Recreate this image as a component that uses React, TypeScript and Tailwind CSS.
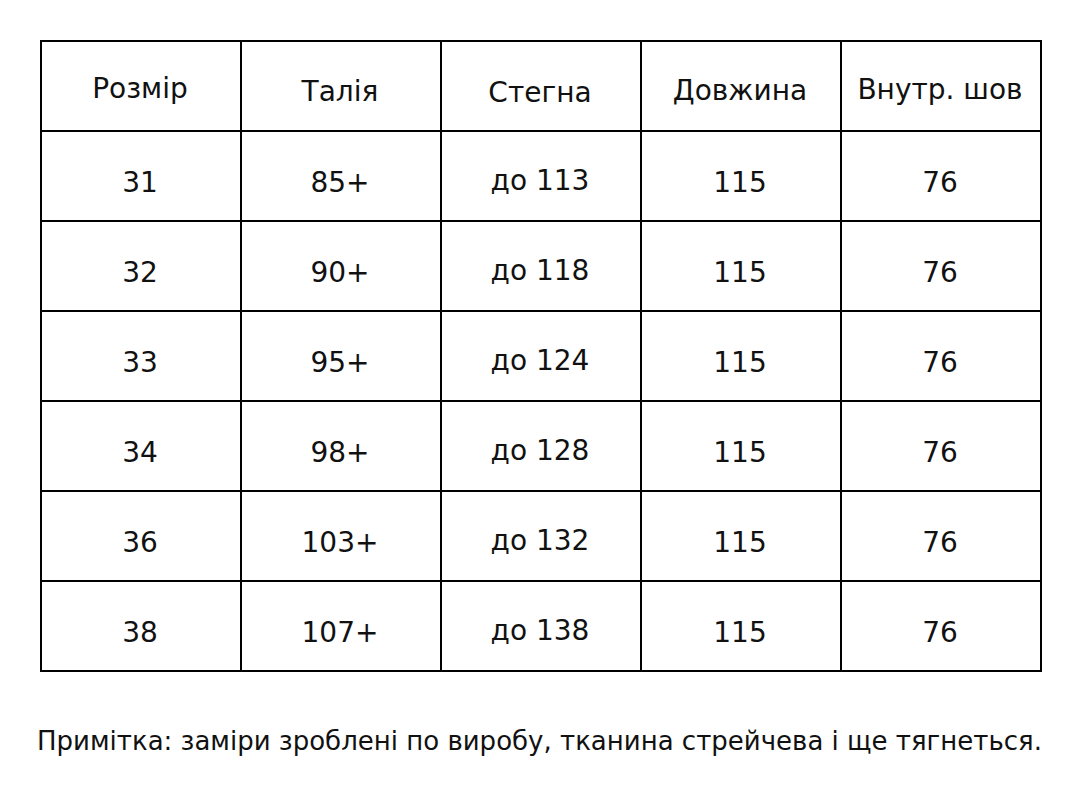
const headers = [
  { text: 'Розмір', shift: 'pt-[6px]' },
  { text: 'Талія', shift: 'pt-[12px]' },
  { text: 'Стегна', shift: 'pt-[14px]' },
  { text: 'Довжина', shift: 'pt-[10px]' },
  { text: 'Внутр. шов', shift: 'pt-[8px]' },
]

const rows = [
  ['31', '85+', 'до 113', '115', '76'],
  ['32', '90+', 'до 118', '115', '76'],
  ['33', '95+', 'до 124', '115', '76'],
  ['34', '98+', 'до 128', '115', '76'],
  ['36', '103+', 'до 132', '115', '76'],
  ['38', '107+', 'до 138', '115', '76'],
]

export default function App() {
  return (
    <div
      className="w-[1080px] h-[790px] bg-white text-[#111] pt-[40px]"
      style={{ fontFamily: '"DejaVu Sans", sans-serif' }}
    >
      <div className="ml-[40px] w-[1002px] grid grid-cols-5 border-l-2 border-t-2 border-black">
        {headers.map((h) => (
          <div
            key={h.text}
            className={`h-[90px] pr-[2px] border-r-2 border-b-2 border-black flex items-center justify-center text-[28px] ${h.shift}`}
          >
            {h.text}
          </div>
        ))}
        {rows.map((row, i) =>
          row.map((cell, j) => (
            <div
              key={i + '-' + j}
              className={`h-[90px] pr-[2px] border-r-2 border-b-2 border-black flex items-center justify-center text-[28px] ${
                j === 2 ? 'pt-[10px]' : 'pt-[14px]'
              }`}
            >
              {cell}
            </div>
          ))
        )}
      </div>
      <p className="mt-[50px] ml-[37px] text-[26px] whitespace-nowrap">
        Примітка: заміри зроблені по виробу, тканина стрейчева і ще тягнеться.
      </p>
    </div>
  )
}
